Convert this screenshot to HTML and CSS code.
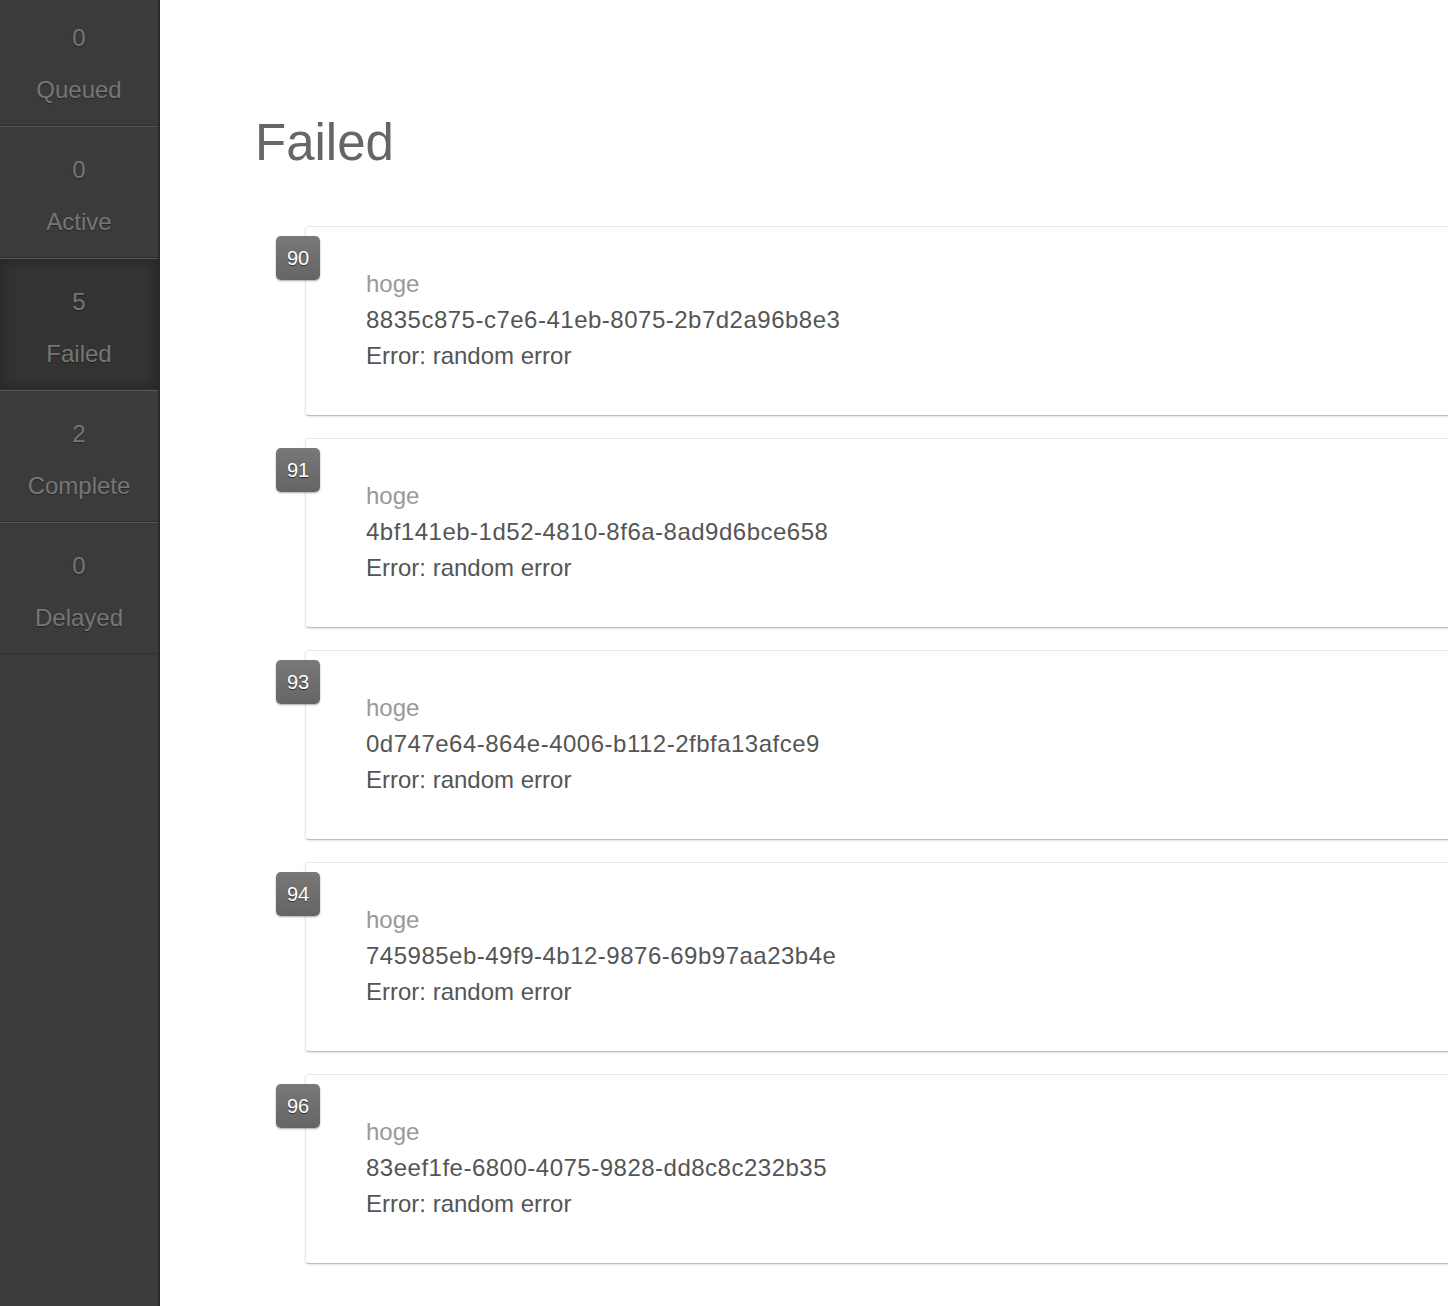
FILE: index.html
```html
<!DOCTYPE html>
<html>
<head>
<meta charset="utf-8">
<title>Failed</title>
<link rel="stylesheet" href="styles.css">
</head>
<body>
<div class="layout">
  <nav class="sidebar">
    <div class="nav-item"><div class="count">0</div><div class="label">Queued</div></div>
    <div class="nav-item"><div class="count">0</div><div class="label">Active</div></div>
    <div class="nav-item active"><div class="count">5</div><div class="label">Failed</div></div>
    <div class="nav-item"><div class="count">2</div><div class="label">Complete</div></div>
    <div class="nav-item"><div class="count">0</div><div class="label">Delayed</div></div>
  </nav>
  <main class="main">
    <h1 class="title">Failed</h1>
    <div class="jobs">
      <div class="job">
        <div class="badge">90</div>
        <div class="type">hoge</div>
        <div class="line id">8835c875-c7e6-41eb-8075-2b7d2a96b8e3</div>
        <div class="line">Error: random error</div>
      </div>
      <div class="job">
        <div class="badge">91</div>
        <div class="type">hoge</div>
        <div class="line id">4bf141eb-1d52-4810-8f6a-8ad9d6bce658</div>
        <div class="line">Error: random error</div>
      </div>
      <div class="job">
        <div class="badge">93</div>
        <div class="type">hoge</div>
        <div class="line id">0d747e64-864e-4006-b112-2fbfa13afce9</div>
        <div class="line">Error: random error</div>
      </div>
      <div class="job">
        <div class="badge">94</div>
        <div class="type">hoge</div>
        <div class="line id">745985eb-49f9-4b12-9876-69b97aa23b4e</div>
        <div class="line">Error: random error</div>
      </div>
      <div class="job">
        <div class="badge">96</div>
        <div class="type">hoge</div>
        <div class="line id">83eef1fe-6800-4075-9828-dd8c8c232b35</div>
        <div class="line">Error: random error</div>
      </div>
    </div>
  </main>
</div>
</body>
</html>
```
FILE: styles.css
```css
html, body {
  margin: 0;
  padding: 0;
  background: #fff;
  font-family: "Liberation Sans", Arial, sans-serif;
  overflow: hidden;
}

.layout {
  display: flex;
  min-height: 1306px;
}

.sidebar {
  width: 158px;
  flex: none;
  background: #3b3b3b;
  border-right: 2px solid #2a2a2a;
  min-height: 1306px;
}

.nav-item {
  padding: 25px 0 17px;
  text-align: center;
  color: #767676;
  font-size: 24px;
  line-height: 36px;
  text-shadow: 0 1px 1px rgba(0, 0, 0, 0.35);
  border-bottom: 1px solid #2f2f2f;
  border-top: 1px solid #575757;
}

.nav-item:first-child {
  padding-top: 20px;
  border-top: none;
}

.nav-item .label {
  margin-top: 16px;
}

.nav-item.active {
  background: #333;
  box-shadow: inset 0 0 14px rgba(0, 0, 0, 0.35);
}

.main {
  flex: 1;
  min-width: 0;
  padding: 113px 0 0 95px;
  overflow: hidden;
}

.title {
  margin: 0;
  font-size: 51px;
  line-height: 60px;
  font-weight: normal;
  color: #666;
}

.jobs {
  margin: 53px 0 0 50px;
}

.job {
  position: relative;
  width: 1400px;
  padding: 39px 0 41px 60px;
  margin-bottom: 22px;
  border: 1px solid #e8e8e8;
  border-bottom-color: #bdbdbd;
  border-radius: 4px;
  box-shadow: 0 1px 2px rgba(0, 0, 0, 0.12);
  font-size: 24px;
  line-height: 36px;
  color: #555;
}

.type {
  color: #999;
}

.id {
  letter-spacing: 0.5px;
}

.badge {
  position: absolute;
  left: -30px;
  top: 9px;
  width: 44px;
  height: 44px;
  border-radius: 5px;
  background: linear-gradient(#787878, #656565);
  box-shadow: 0 1px 2px rgba(0, 0, 0, 0.35);
  color: #fff;
  font-size: 20px;
  line-height: 44px;
  text-align: center;
  text-shadow: 0 1px 1px rgba(0, 0, 0, 0.6);
}
```
